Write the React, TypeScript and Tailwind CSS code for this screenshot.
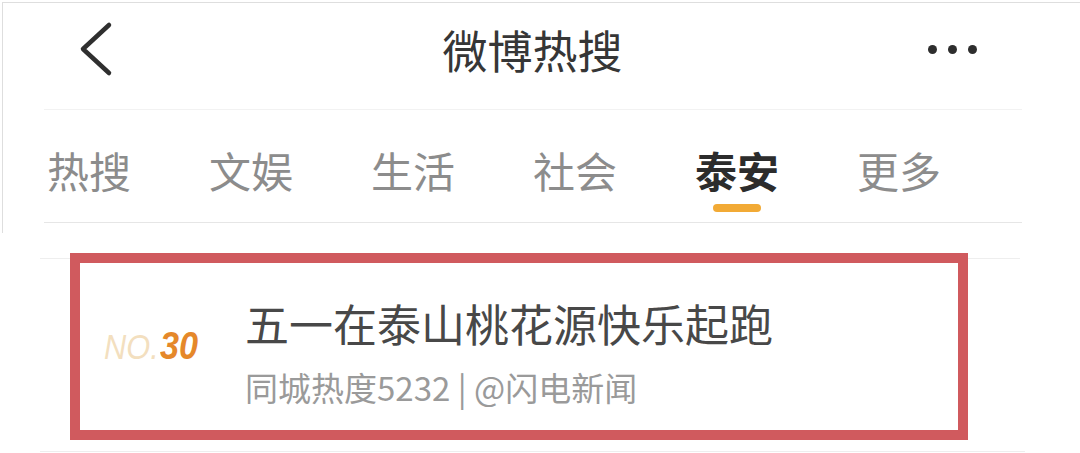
const tabs = ["热搜", "文娱", "生活", "社会", "泰安", "更多"];
const activeTab = "泰安";

function BackIcon() {
  return (
    <svg width="40" height="56" viewBox="0 0 40 56" fill="none">
      <polyline
        points="32,4 6,28 32,52"
        stroke="#2f2f2f"
        strokeWidth="4.5"
        strokeLinecap="round"
        strokeLinejoin="round"
      />
    </svg>
  );
}

function MoreDots() {
  return (
    <div className="flex items-center gap-[11px]">
      <span className="block h-[9px] w-[9px] rounded-full bg-[#2e2e2e]" />
      <span className="block h-[9px] w-[9px] rounded-full bg-[#2e2e2e]" />
      <span className="block h-[9px] w-[9px] rounded-full bg-[#2e2e2e]" />
    </div>
  );
}

export default function App() {
  return (
    <div className="relative h-[453px] w-[1080px] overflow-hidden bg-white font-['Noto_Sans_CJK_SC','Noto_Sans',sans-serif]">
      {/* top frame (pasted screenshot) */}
      <div className="ml-[2px] mt-[2px] h-[231px] border-l border-t border-[#dedede]">
        <div className="flex h-[106px] items-center pb-[14px]">
          <div className="w-[200px] pl-[74px]">
            <BackIcon />
          </div>
          <div className="flex-1 text-center text-[45px] leading-none text-[#363636]">微博热搜</div>
          <div className="flex w-[218px] pl-[66px]">
            <MoreDots />
          </div>
        </div>
        <div className="ml-[41px] mr-[58px] h-px bg-[#f2f2f2]" />
        <div className="flex h-[112px] items-start gap-[78px] pl-[44px] pt-[39px]">
          {tabs.map((tab) => (
            <div key={tab} className="flex flex-col items-center">
              <span
                className={`text-[42px] leading-none ${
                  tab === activeTab ? "font-bold text-[#2c2c2c]" : "text-[#8c8c8c]"
                }`}
              >
                {tab}
              </span>
              <span
                className={`mt-[13px] block h-[8px] w-[48px] rounded-full ${
                  tab === activeTab ? "bg-[#f2aa35]" : "bg-transparent"
                }`}
              />
            </div>
          ))}
        </div>
        <div className="ml-[41px] mr-[58px] h-px bg-[#e6e6e6]" />
      </div>

      {/* hot list */}
      <div className="pt-[25px]">
        <div className="ml-[40px] mr-[60px] h-px bg-[#eeeeee]" />
        <div className="flex h-[192px] items-center pl-[104px]">
          <div className="mb-[18px] flex w-[141px] items-baseline italic leading-none">
            <span className="mr-[-6px] inline-block origin-left scale-x-[0.88] font-['Liberation_Sans',sans-serif] text-[35px] text-[#f3dfbf]">
              NO.
            </span>
            <span className="inline-block origin-left scale-x-[0.9] font-['Liberation_Sans',sans-serif] text-[38px] font-bold text-[#e5882a]">
              30
            </span>
          </div>
          <div className="mb-[6px] flex flex-col">
            <span className="text-[44px] leading-none text-[#484848]">五一在泰山桃花源快乐起跑</span>
            <span className="mt-[26px] text-[33px] leading-none text-[#9a9a9a]">同城热度5232 | @闪电新闻</span>
          </div>
        </div>
        <div className="ml-[40px] mr-[55px] h-px bg-[#eeeeee]" />
      </div>

      {/* annotation box */}
      <div className="absolute left-[70px] top-[253px] h-[187px] w-[898px] border-[10px] border-[#d05a5e]" />
    </div>
  );
}
